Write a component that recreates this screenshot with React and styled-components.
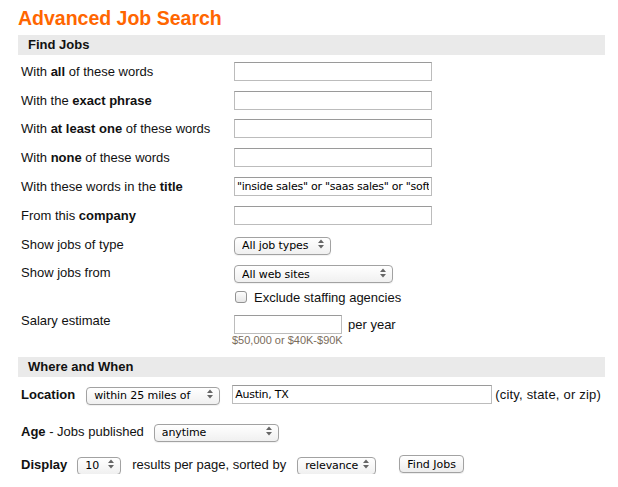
import styled, { createGlobalStyle } from "styled-components";

const GlobalStyle = createGlobalStyle`
  body {
    margin: 0;
    background: #fff;
    color: #000;
    font-family: "Liberation Sans", Arial, sans-serif;
  }
`;

const fields = [
  { pre: "With ", bold: "all", post: " of these words" },
  { pre: "With the ", bold: "exact phrase", post: "" },
  { pre: "With ", bold: "at least one", post: " of these words" },
  { pre: "With ", bold: "none", post: " of these words" },
  {
    pre: "With these words in the ",
    bold: "title",
    post: "",
    value: '"inside sales" or "saas sales" or "software sales"',
  },
  { pre: "From this ", bold: "company", post: "" },
];

const Arrows = () => (
  <ArrowIcon width="6" height="10" viewBox="0 0 6 10">
    <polygon points="0,4 3,0.5 6,4" fill="#666" />
    <polygon points="0,6 3,9.5 6,6" fill="#666" />
  </ArrowIcon>
);

const Select = ({ width, ml, options }) => (
  <SelectWrap $w={width} $ml={ml}>
    <NativeSelect defaultValue={options[0]}>
      {options.map((o) => (
        <option key={o}>{o}</option>
      ))}
    </NativeSelect>
    <Arrows />
  </SelectWrap>
);

const App = () => {
  return (
    <>
      <GlobalStyle />
      <Page>
        <Title>Advanced Job Search</Title>

        {/* find jobs */}
        <SectionBar>Find Jobs</SectionBar>
        <Form>
          {fields.map((f) => (
            <FieldRow key={f.bold}>
              <Label>
                {f.pre}
                <b>{f.bold}</b>
                {f.post}
              </Label>
              <TextInput $w={198} defaultValue={f.value || ""} />
            </FieldRow>
          ))}
          <FieldRow>
            <Label>Show jobs of type</Label>
            <div>
              <Select width={97} options={["All job types"]} />
            </div>
          </FieldRow>
          <FieldRow>
            <Label>Show jobs from</Label>
            <div>
              <Select width={159} options={["All web sites"]} />
            </div>
          </FieldRow>
          <FieldRow $h={20}>
            <span />
            <CheckLine>
              <CheckBox type="checkbox" />
              Exclude staffing agencies
            </CheckLine>
          </FieldRow>
          <SalaryRow>
            <SalaryLabel>Salary estimate</SalaryLabel>
            <SalaryBox>
              <InlineLine>
                <TextInput $w={108} />
                <Unit>per year</Unit>
              </InlineLine>
              <Hint>$50,000 or $40K-$90K</Hint>
            </SalaryBox>
          </SalaryRow>
        </Form>

        {/* where and when */}
        <SectionBar>Where and When</SectionBar>
        <Bottom>
          <LineRow $mt={7}>
            <Label>
              <b>Location</b>
            </Label>
            <Select width={134} ml={11} options={["within 25 miles of"]} />
            <TextInput $w={260} $ml={12} defaultValue="Austin, TX" />
            <Plain $ml={3} $ls={0.2}>(city, state, or zip)</Plain>
          </LineRow>
          <LineRow $mt={17}>
            <Label>
              <b>Age</b> - Jobs published
            </Label>
            <Select width={125} ml={10} options={["anytime"]} />
          </LineRow>
          <LineRow $mt={13}>
            <Label>
              <b>Display</b>
            </Label>
            <Select width={44} ml={10} options={["10"]} />
            <Plain $ml={11}>results per page, sorted by</Plain>
            <Select width={79} ml={11} options={["relevance"]} />
            <Button type="button">Find Jobs</Button>
          </LineRow>
        </Bottom>
      </Page>
    </>
  );
};

// page
const Page = styled.div`
  width: 587px;
  padding: 7px 0 0 18px;
`;

const Title = styled.h1`
  margin: 0 0 6px;
  font-size: 19.5px;
  line-height: 22px;
  font-weight: bold;
  color: #ff6600;
`;

const SectionBar = styled.div`
  height: 20px;
  padding-left: 10px;
  background: #eaeaea;
  font-size: 13px;
  font-weight: bold;
  line-height: 20px;
  color: #111;
`;

// find jobs form
const Form = styled.div`
  padding: 2px 0 0 3px;
`;

const FieldRow = styled.div`
  display: grid;
  grid-template-columns: 213px 1fr;
  align-items: center;
  height: ${(p) => p.$h || 28.8}px;
`;

const Label = styled.span`
  font-size: 13px;
  line-height: 15px;
  color: #111;
  white-space: nowrap;
`;

const TextInput = styled.input`
  box-sizing: border-box;
  width: ${(p) => p.$w}px;
  height: 19px;
  margin: 0 0 0 ${(p) => p.$ml || 0}px;
  padding: 0 2px;
  border: 1px solid #bcbcbc;
  border-top-color: #9a9a9a;
  background: #fff;
  font-family: "DejaVu Sans", sans-serif;
  font-size: 11px;
  letter-spacing: -0.25px;
  color: #000;
  outline: none;
`;

const CheckLine = styled.label`
  display: flex;
  align-items: center;
  font-size: 13px;
  color: #111;
`;

const CheckBox = styled.input`
  appearance: none;
  box-sizing: border-box;
  width: 12px;
  height: 12px;
  margin: 0 7px 0 1px;
  border: 1px solid #939393;
  border-radius: 3px;
  background: linear-gradient(#fdfdfd, #e6e6e6);
`;

const SalaryRow = styled.div`
  display: grid;
  grid-template-columns: 213px 1fr;
  align-items: start;
  padding-bottom: 10px;
`;

const SalaryLabel = styled(Label)`
  padding-top: 6px;
`;

const SalaryBox = styled.div`
  padding-top: 8px;
`;

const InlineLine = styled.div`
  display: flex;
  align-items: center;
`;

const Unit = styled.span`
  margin-left: 6px;
  font-size: 13px;
  color: #111;
`;

const Hint = styled.div`
  margin-left: -2px;
  font-size: 11px;
  line-height: 13px;
  color: #7a6c5c;
`;

// where and when
const Bottom = styled.div`
  padding-left: 3px;
`;

const LineRow = styled.div`
  display: flex;
  align-items: center;
  height: 20px;
  margin-top: ${(p) => p.$mt}px;
`;

const Plain = styled.span`
  margin-left: ${(p) => p.$ml || 0}px;
  font-size: 13px;
  letter-spacing: ${(p) => p.$ls || 0}px;
  color: #111;
  white-space: nowrap;
`;

// mac style controls
const SelectWrap = styled.div`
  position: relative;
  flex: none;
  width: ${(p) => p.$w}px;
  height: 18px;
  margin-left: ${(p) => p.$ml || 0}px;
`;

const NativeSelect = styled.select`
  appearance: none;
  box-sizing: border-box;
  width: 100%;
  height: 100%;
  margin: 0;
  padding: 0 0 0 7px;
  border: 1px solid #a2a2a2;
  border-radius: 4px;
  background: linear-gradient(#ffffff, #f0f0f0);
  box-shadow: 0 1px 1px rgba(0, 0, 0, 0.06);
  font-family: "DejaVu Sans", sans-serif;
  font-size: 11px;
  letter-spacing: -0.1px;
  color: #000;
  outline: none;
`;

const ArrowIcon = styled.svg`
  position: absolute;
  right: 7px;
  top: 4px;
  pointer-events: none;
`;

const Button = styled.button`
  box-sizing: border-box;
  width: 65px;
  height: 18px;
  margin-left: 23px;
  padding: 0;
  border: 1px solid #a2a2a2;
  border-radius: 4px;
  background: linear-gradient(#ffffff, #ececec);
  box-shadow: 0 1px 1px rgba(0, 0, 0, 0.08);
  font-family: "DejaVu Sans", sans-serif;
  font-size: 11px;
  color: #000;
`;

export default App;
